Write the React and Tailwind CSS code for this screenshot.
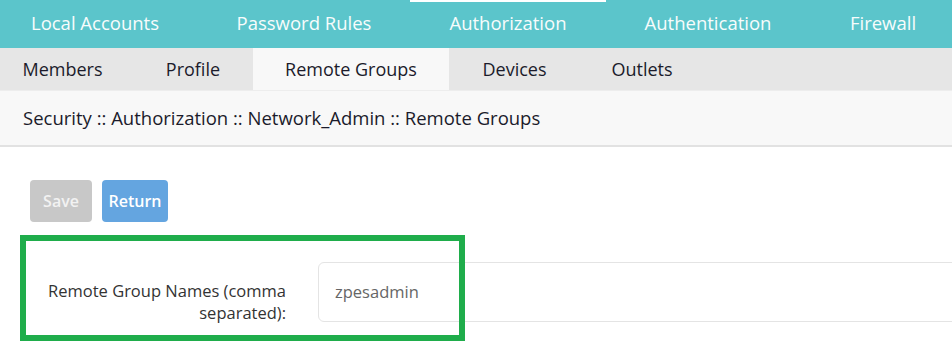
import React from "react";

const topTabs = [
  { label: "Local Accounts", w: "w-[198px]", pad: "pr-[8px]" },
  { label: "Password Rules", w: "w-[212px]" },
  { label: "Authorization", w: "w-[196px]", active: true },
  { label: "Authentication", w: "w-[204px]" },
  { label: "Firewall", w: "w-[146px]" },
];

const subTabs = [
  { label: "Members", w: "w-[133px]", pad: "pr-[8px]" },
  { label: "Profile", w: "w-[120px]" },
  { label: "Remote Groups", w: "w-[196px]", active: true },
  { label: "Devices", w: "w-[131px]" },
  { label: "Outlets", w: "w-[124px]" },
];

export default function App() {
  return (
    <div
      className="relative w-[952px] h-[353px] overflow-hidden bg-white"
      style={{ fontFamily: '"Open Sans", "Noto Sans", sans-serif' }}
    >
      {/* top nav */}
      <div className="flex h-[48px] bg-[#5bc5cb] shrink-0">
        {topTabs.map((t) => (
          <div
            key={t.label}
            className={`${t.w} ${t.pad || ""} shrink-0 flex items-center justify-center border-t-2 text-[18.5px] text-[#f7fcfc] ${
              t.active ? "border-white" : "border-transparent"
            }`}
          >
            <span className="-mt-[5px]">{t.label}</span>
          </div>
        ))}
      </div>

      {/* sub nav */}
      <div className="flex h-[42px] bg-[#e6e6e6]">
        {subTabs.map((t) => (
          <div
            key={t.label}
            className={`${t.w} ${t.pad || ""} shrink-0 flex items-center justify-center text-[18px] text-[#1b1b2b] ${
              t.active ? "bg-[#f8f8f8]" : ""
            }`}
          >
            {t.label}
          </div>
        ))}
      </div>

      {/* breadcrumb */}
      <div className="h-[57px] bg-[#f8f8f8] border-t border-[#ededed] border-b-2 border-b-[#e2e2e2] flex items-center pl-[23px] text-[18.5px] text-[#1b1b2b]">
        Security :: Authorization :: Network_Admin :: Remote Groups
      </div>

      {/* buttons */}
      <div className="flex gap-[10px] pl-[30px] pt-[33px]">
        <button className="w-[62px] h-[42px] rounded-[4px] bg-[#c8c8c8] text-[#f2f2f2] text-[16px] font-semibold">
          Save
        </button>
        <button className="w-[66px] h-[42px] rounded-[4px] bg-[#64a5e0] text-white text-[16px] font-semibold">
          Return
        </button>
      </div>

      {/* form row */}
      <div className="flex items-start mt-[40px]">
        <div className="w-[286px] shrink-0 text-right text-[16.5px] leading-[22px] text-[#333333] pl-[40px] pt-[18px]">
          Remote Group Names (comma separated):
        </div>
        <div className="ml-[32px] flex-1 h-[60px] -mr-[20px] rounded-[6px] border border-[#e4e4e4] flex items-center pl-[16px] text-[16.5px] text-[#666666]">
          zpesadmin
        </div>
      </div>

      {/* annotation box */}
      <div className="absolute left-[20px] top-[235px] w-[445px] h-[106px] border-[6px] border-[#1fad4b] pointer-events-none" />
    </div>
  );
}
